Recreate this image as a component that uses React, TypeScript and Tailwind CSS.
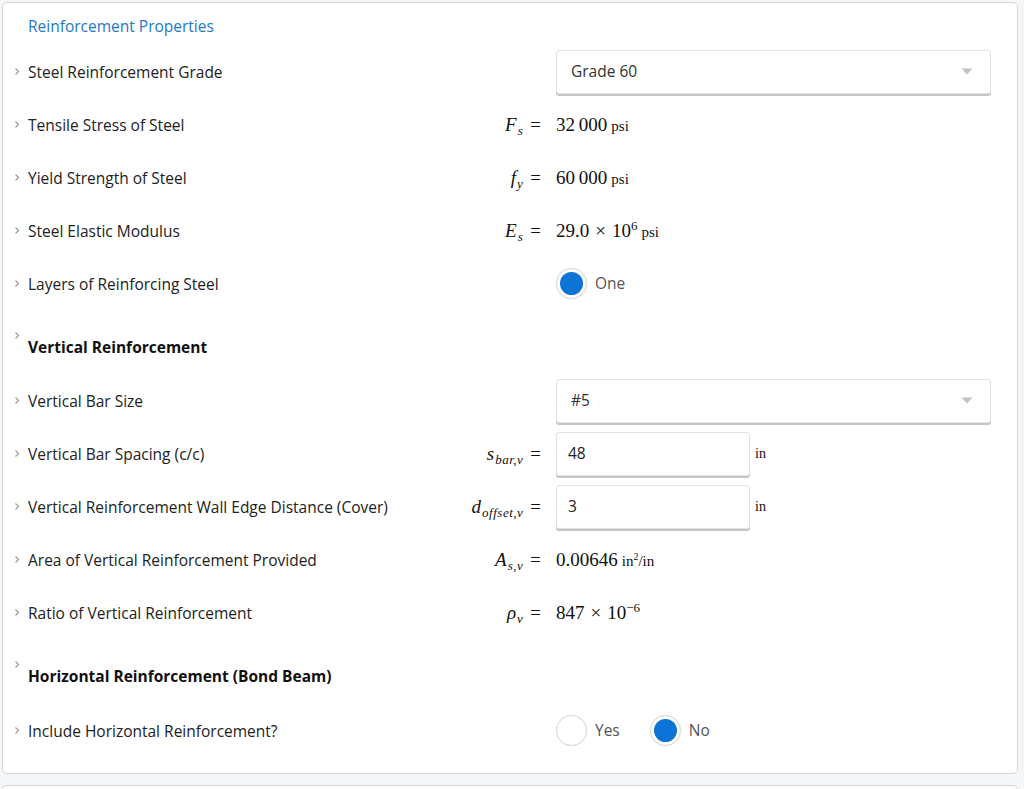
import React from "react";

const sans = { fontFamily: '"Open Sans", "Noto Sans", sans-serif' };

const Chevron = () => (
  <svg width="6" height="9" viewBox="0 0 6 9" className="shrink-0">
    <path d="M1.5 1.5l3 3-3 3" stroke="#9b9b9b" strokeWidth="1.2" fill="none" />
  </svg>
);

const Caret = () => (
  <svg width="12" height="7" viewBox="0 0 12 7">
    <path d="M0.5 0.5h11l-5.5 6z" fill="#c2c2c2" />
  </svg>
);

const Radio = ({ checked }: { checked: boolean }) => (
  <span className="flex h-[31px] w-[31px] items-center justify-center rounded-full border border-[#d9d9d9] bg-white shadow-[0_0_1px_rgba(0,0,0,0.1)]">
    {checked && <span className="h-[23px] w-[23px] rounded-full bg-[#0c74d6]" />}
  </span>
);

const Row = ({
  label,
  math,
  children,
}: {
  label: string;
  math?: React.ReactNode;
  children?: React.ReactNode;
}) => (
  <div className="flex h-[53px] items-center">
    <div className="flex w-[538px] items-center justify-between">
      <div className="flex items-center">
        <span className="ml-[11px] mr-[14px] flex w-0 items-center">
          <Chevron />
        </span>
        <span className="text-[15.5px] leading-5 text-[#222]" style={sans}>
          {label}
        </span>
      </div>
      <div className="flex items-center" style={{ fontFamily: '"Liberation Serif", serif' }}>
        {math}
      </div>
    </div>
    <div className="ml-[15px] flex flex-1 items-center">{children}</div>
  </div>
);

const Eq = ({ sym, sub }: { sym: string; sub: string }) => (
  <span className="flex items-baseline text-[19px] leading-none text-[#111]">
    <span className="italic">{sym}</span>
    <span className="relative top-[4px] ml-[1px] text-[13px] italic tracking-[0.5px]">{sub}</span>
    <span className="ml-[7px]">=</span>
  </span>
);

const Val = ({ children }: { children: React.ReactNode }) => (
  <span
    className="flex items-baseline text-[19px] leading-none text-[#111]"
    style={{ fontFamily: '"Liberation Serif", serif' }}
  >
    {children}
  </span>
);

const Unit = ({ children }: { children: React.ReactNode }) => (
  <span className="ml-[4px] text-[15px]">{children}</span>
);

const Select = ({ value }: { value: string }) => (
  <div className="flex h-[44px] w-[435px] items-center justify-between rounded-[3px] border border-[#e2e2e2] bg-white pl-[14px] pr-[17px] shadow-[0_2px_0_#c6c6c6]">
    <span className="text-[15.5px] text-[#333]" style={sans}>
      {value}
    </span>
    <Caret />
  </div>
);

const Input = ({ value }: { value: string }) => (
  <div className="flex items-start">
    <div className="flex h-[44px] w-[194px] items-center rounded-[3px] border border-[#e2e2e2] bg-white pl-[11px] shadow-[0_2px_0_#c6c6c6]">
      <span className="text-[15.5px] text-[#222]" style={sans}>
        {value}
      </span>
    </div>
    <span
      className="ml-[5px] mt-[15px] text-[14px] leading-none text-[#111]"
      style={{ fontFamily: '"Liberation Serif", serif' }}
    >
      in
    </span>
  </div>
);

const Header = ({ title, h }: { title: string; h: string }) => (
  <div className={`flex items-start ${h} pt-[19px]`}>
    <span className="ml-[11px] mr-[14px] flex w-0 items-center pt-[2px]">
      <Chevron />
    </span>
    <span className="mt-[8px] text-[15.5px] font-bold leading-5 text-[#111]" style={sans}>
      {title}
    </span>
  </div>
);

export default function App() {
  return (
    <div className="min-h-[789px] w-[1024px] bg-[#f5f6f7] p-[2px] pr-[6px]">
      <div className="rounded-[5px] border border-[#d5d6d8] bg-white pb-[16px]">
        <div className="h-[42px] pl-[25px] pt-[11px]">
          <span className="text-[15.5px] leading-5 text-[#1f78c6]" style={sans}>
            Reinforcement Properties
          </span>
        </div>

        <Row label="Steel Reinforcement Grade">
          <Select value="Grade 60" />
        </Row>
        <Row label="Tensile Stress of Steel" math={<Eq sym="F" sub="s" />}>
          <Val>
            32&#8201;000<Unit>psi</Unit>
          </Val>
        </Row>
        <Row label="Yield Strength of Steel" math={<Eq sym="f" sub="y" />}>
          <Val>
            60&#8201;000<Unit>psi</Unit>
          </Val>
        </Row>
        <Row label="Steel Elastic Modulus" math={<Eq sym="E" sub="s" />}>
          <Val>
            29.0<span className="mx-[6px]">×</span>10
            <span className="relative -top-[7px] text-[13px]">6</span>
            <Unit>psi</Unit>
          </Val>
        </Row>
        <Row label="Layers of Reinforcing Steel">
          <div className="flex items-center">
            <Radio checked />
            <span className="ml-[8px] text-[15.5px] text-[#555]" style={sans}>
              One
            </span>
          </div>
        </Row>

        <Header title="Vertical Reinforcement" h="h-[64px]" />

        <Row label="Vertical Bar Size">
          <Select value="#5" />
        </Row>
        <Row label="Vertical Bar Spacing (c/c)" math={<Eq sym="s" sub="bar,v" />}>
          <Input value="48" />
        </Row>
        <Row
          label="Vertical Reinforcement Wall Edge Distance (Cover)"
          math={<Eq sym="d" sub="offset,v" />}
        >
          <Input value="3" />
        </Row>
        <Row label="Area of Vertical Reinforcement Provided" math={<Eq sym="A" sub="s,v" />}>
          <Val>
            0.00646
            <span className="ml-[4px] text-[15px]">
              in<span className="relative -top-[6px] text-[10px]">2</span>/in
            </span>
          </Val>
        </Row>
        <Row label="Ratio of Vertical Reinforcement" math={<Eq sym="ρ" sub="v" />}>
          <Val>
            847<span className="mx-[6px]">×</span>10
            <span className="relative -top-[7px] text-[13px]">−6</span>
          </Val>
        </Row>

        <Header title="Horizontal Reinforcement (Bond Beam)" h="h-[65px]" />

        <Row label="Include Horizontal Reinforcement?">
          <div className="flex items-center">
            <Radio checked={false} />
            <span className="ml-[8px] text-[15.5px] text-[#555]" style={sans}>
              Yes
            </span>
            <span className="ml-[30px]">
              <Radio checked />
            </span>
            <span className="ml-[8px] text-[15.5px] text-[#555]" style={sans}>
              No
            </span>
          </div>
        </Row>
      </div>
      <div className="mt-[11px] h-[10px] rounded-t-[5px] border border-b-0 border-[#d5d6d8] bg-white" />
    </div>
  );
}
